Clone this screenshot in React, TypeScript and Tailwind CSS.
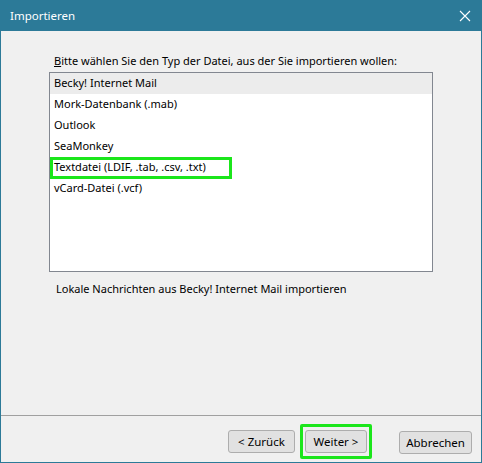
const ITEMS = [
  'Becky! Internet Mail',
  'Mork-Datenbank (.mab)',
  'Outlook',
  'SeaMonkey',
  'Textdatei (LDIF, .tab, .csv, .txt)',
  'vCard-Datei (.vcf)',
]

function CloseIcon() {
  return (
    <svg width="12" height="12" viewBox="0 0 12 12" className="block">
      <path d="M1 1 L11 11 M11 1 L1 11" stroke="#ffffff" strokeWidth="1.1" fill="none" />
    </svg>
  )
}

function Button({ label, width, highlight }: { label: string; width: string; highlight?: boolean }) {
  const btn = (
    <button
      type="button"
      className={
        'h-[23px] text-[11.5px] text-black bg-[#e1e1e1] border border-[#adadad] rounded-[3px] leading-none ' + width
      }
    >
      {label}
    </button>
  )
  if (!highlight) return btn
  return <div className="flex border-[3px] border-[#1be61b] rounded-[2px] px-[2px] py-[3px]">{btn}</div>
}

export default function App() {
  return (
    <div
      className="w-[482px] h-[463px] flex flex-col bg-[#2c7a98] px-px pb-px overflow-hidden"
      style={{ fontFamily: '"Noto Sans", "Open Sans", sans-serif' }}
    >
      {/* Title bar */}
      <div className="h-[31px] flex items-center justify-between pl-[9px] pr-[10px] text-white text-[11.5px]">
        <span>Importieren</span>
        <CloseIcon />
      </div>

      <div className="flex-1 flex flex-col bg-[#f0f0f0]">
        <div className="flex-1 flex flex-col pl-[48px] pr-[48px] pt-[21px]">
          <p className="pl-[5px] text-[11px] text-black leading-[18px] mb-[2px]">
            <span className="underline">B</span>itte wählen Sie den Typ der Datei, aus der Sie importieren wollen:
          </p>

          <div className="h-[200px] bg-white border border-[#828790] flex flex-col">
            {ITEMS.map((item, i) => (
              <div
                key={item}
                className={
                  'h-[21px] flex items-center pl-[4px] text-[11px] text-black ' +
                  (i === 0 ? 'bg-[#ececec]' : '')
                }
              >
                {i === 4 ? (
                  <span className="w-[182px] h-[22px] -ml-[4px] pl-[1px] flex items-center border-[3px] border-[#1be61b]">
                    {item}
                  </span>
                ) : (
                  item
                )}
              </div>
            ))}
          </div>

          <p className="pl-[7px] pt-[9px] text-[11px] text-black">
            Lokale Nachrichten aus Becky! Internet Mail importieren
          </p>
        </div>

        <div className="h-[47px] border-t border-[#a0a0a0] flex items-start justify-end pt-[8px] pr-[9px]">
          <div className="flex items-center">
            <Button label="< Zurück" width="w-[67px]" />
            <div className="ml-[5px]">
              <Button label="Weiter >" width="w-[62px]" highlight />
            </div>
            <div className="ml-[27px]">
              <Button label="Abbrechen" width="w-[73px]" />
            </div>
          </div>
        </div>
      </div>
    </div>
  )
}
